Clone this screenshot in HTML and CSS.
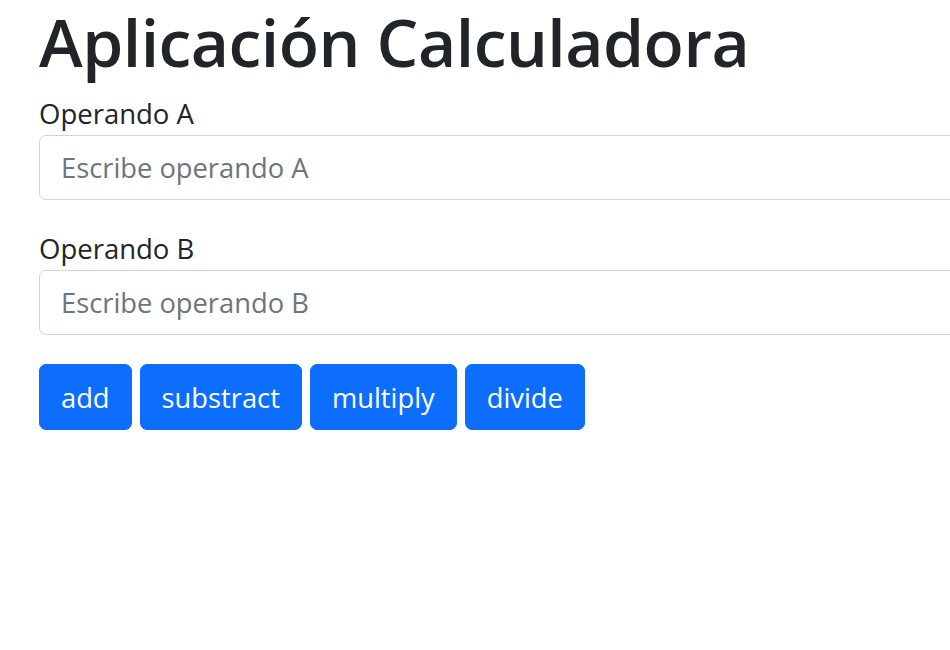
FILE: index.html
```html
<!DOCTYPE html>
<html lang="es">
<head>
<meta charset="utf-8">
<title>Aplicación Calculadora</title>
<link rel="stylesheet" href="styles.css">
</head>
<body>
<main class="container">
  <h1 class="title">Aplicación Calculadora</h1>
  <div class="field">
    <label class="label" for="a">Operando A</label>
    <input class="input" id="a" type="text" placeholder="Escribe operando A">
  </div>
  <div class="field">
    <label class="label" for="b">Operando B</label>
    <input class="input" id="b" type="text" placeholder="Escribe operando B">
  </div>
  <div class="actions">
    <button class="btn">add</button>
    <button class="btn">substract</button>
    <button class="btn">multiply</button>
    <button class="btn">divide</button>
  </div>
</main>
</body>
</html>
```
FILE: styles.css
```css
html, body {
  margin: 0;
  padding: 0;
  background: #fff;
  overflow: hidden;
}
body {
  font-family: "Open Sans", "Noto Sans", sans-serif;
  color: #212529;
}
.container {
  padding: 0 0 0 39px;
  width: 1000px;
}
.title {
  margin: 0 0 18px 0;
  padding-top: 7px;
  font-size: 66px;
  font-weight: 600;
  line-height: 68px;
  letter-spacing: -0.5px;
}
.field {
  margin-bottom: 28px;
}
.label {
  display: block;
  font-size: 27.5px;
  line-height: 42px;
}
.input {
  display: block;
  box-sizing: border-box;
  width: 1000px;
  height: 65px;
  padding: 0 21px;
  border: 1px solid #ced4da;
  border-radius: 7px;
  font-family: inherit;
  font-size: 27.3px;
  color: #212529;
  background: #fff;
}
.input::placeholder {
  color: #6c757d;
}
.actions {
  display: flex;
  gap: 8px;
  padding-top: 1px;
}
.btn {
  height: 66px;
  padding: 0 21px;
  border: 1px solid #0d6efd;
  border-radius: 7px;
  background: #0d6efd;
  color: #fff;
  font-family: inherit;
  font-size: 27.3px;
}
```
